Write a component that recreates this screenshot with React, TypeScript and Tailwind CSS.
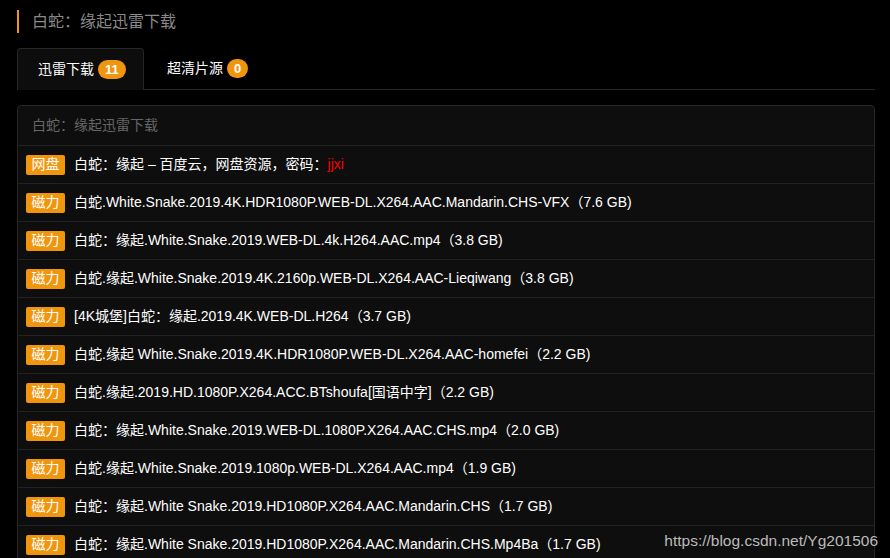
const rows: { tag: string; text: string; pwd?: string }[] = [
  { tag: "网盘", text: "白蛇：缘起 – 百度云，网盘资源，密码：", pwd: "jjxi" },
  { tag: "磁力", text: "白蛇.White.Snake.2019.4K.HDR1080P.WEB-DL.X264.AAC.Mandarin.CHS-VFX（7.6 GB)" },
  { tag: "磁力", text: "白蛇：缘起.White.Snake.2019.WEB-DL.4k.H264.AAC.mp4（3.8 GB)" },
  { tag: "磁力", text: "白蛇.缘起.White.Snake.2019.4K.2160p.WEB-DL.X264.AAC-Lieqiwang（3.8 GB)" },
  { tag: "磁力", text: "[4K城堡]白蛇：缘起.2019.4K.WEB-DL.H264（3.7 GB)" },
  { tag: "磁力", text: "白蛇.缘起 White.Snake.2019.4K.HDR1080P.WEB-DL.X264.AAC-homefei（2.2 GB)" },
  { tag: "磁力", text: "白蛇.缘起.2019.HD.1080P.X264.ACC.BTshoufa[国语中字]（2.2 GB)" },
  { tag: "磁力", text: "白蛇：缘起.White.Snake.2019.WEB-DL.1080P.X264.AAC.CHS.mp4（2.0 GB)" },
  { tag: "磁力", text: "白蛇.缘起.White.Snake.2019.1080p.WEB-DL.X264.AAC.mp4（1.9 GB)" },
  { tag: "磁力", text: "白蛇：缘起.White Snake.2019.HD1080P.X264.AAC.Mandarin.CHS（1.7 GB)" },
  { tag: "磁力", text: "白蛇：缘起.White Snake.2019.HD1080P.X264.AAC.Mandarin.CHS.Mp4Ba（1.7 GB)" },
];

export default function App() {
  return (
    <div
      className="relative h-[558px] overflow-hidden bg-black pl-[17px] pr-[15px] pt-[10px]"
      style={{ fontFamily: '"Liberation Sans", "Noto Sans CJK SC", sans-serif' }}
    >
      <div className="flex h-[23px] items-center border-l-2 border-[#f0960e] pl-[13px] text-[16px] text-[#8a8a8a]">
        白蛇：缘起迅雷下载
      </div>

      <div className="mt-[16px] flex h-[41px] items-end border-b border-[#262626]">
        <div className="-mb-px flex h-[42px] w-[127px] items-center rounded-t-[4px] border border-b-0 border-[#262626] bg-[#0d0d0d] pl-[20px] text-[14px] text-white">
          迅雷下载
          <span className="ml-[4px] flex h-[19px] items-center rounded-full bg-[#f0960e] px-[7px] text-[13px] font-bold">11</span>
        </div>
        <div className="flex h-[41px] items-center pl-[23px] text-[14px] text-white">
          超清片源
          <span className="ml-[4px] flex h-[19px] items-center rounded-full bg-[#f0960e] px-[7px] text-[13px] font-bold">0</span>
        </div>
      </div>

      <div className="mt-[15px] rounded-t-[4px] border border-[#262626] bg-[#0e0e0e]">
        <div className="flex h-[39px] items-center px-[14px] text-[14px] text-[#666]">白蛇：缘起迅雷下载</div>
        {rows.map((r, i) => (
          <div key={i} className="flex h-[38px] items-center border-t border-[#222] px-[8px] text-[14px] text-white">
            <span className="flex h-[20px] w-[39px] items-center justify-center rounded-[2px] bg-[#f0960e] text-[14px]">
              {r.tag}
            </span>
            <span className="ml-[9px]">
              {r.text}
              {r.pwd && <span className="text-[#f00]">{r.pwd}</span>}
            </span>
          </div>
        ))}
      </div>

      <div className="absolute right-[12px] top-[529px] text-[15.5px] text-[#bbb]">https://blog.csdn.net/Yg201506</div>
    </div>
  );
}
